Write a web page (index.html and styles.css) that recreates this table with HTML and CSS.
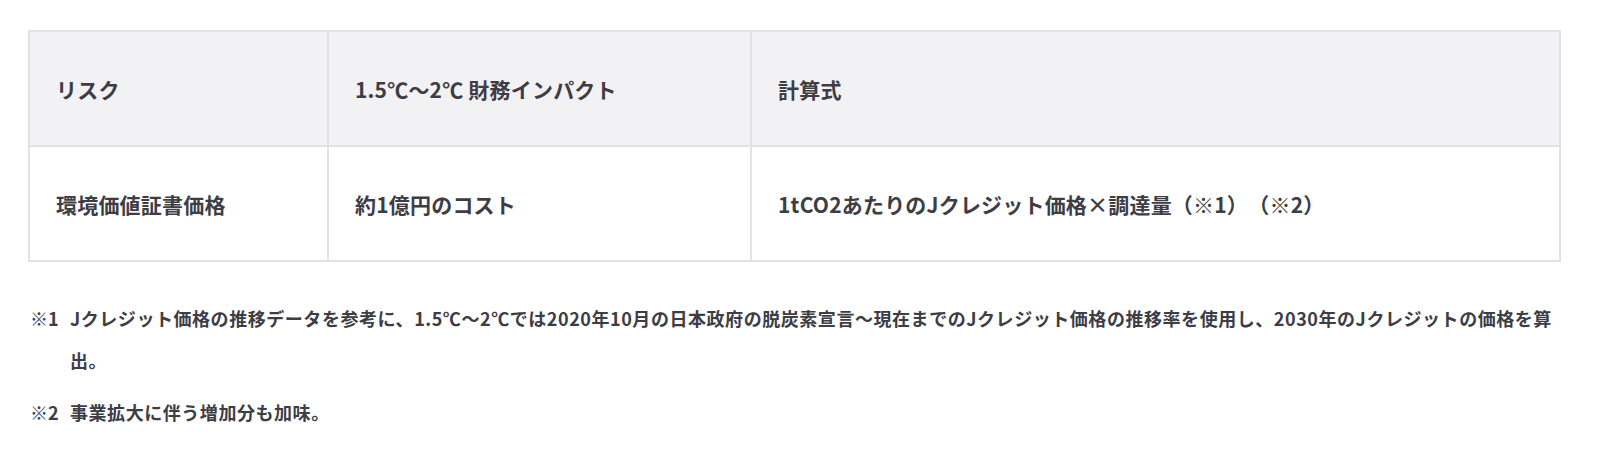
FILE: index.html
```html
<!DOCTYPE html>
<html lang="ja">
<head>
<meta charset="utf-8">
<link rel="stylesheet" href="styles.css">
</head>
<body>
<div class="page">
  <table class="risk-table">
    <colgroup>
      <col class="col-risk">
      <col class="col-impact">
      <col class="col-formula">
    </colgroup>
    <thead>
      <tr>
        <th>リスク</th>
        <th>1.5℃～2℃ 財務インパクト</th>
        <th>計算式</th>
      </tr>
    </thead>
    <tbody>
      <tr>
        <td>環境価値証書価格</td>
        <td>約1億円のコスト</td>
        <td>1tCO2あたりのJクレジット価格×調達量（※1）　（※2）</td>
      </tr>
    </tbody>
  </table>
  <ul class="notes">
    <li class="note"><span class="note-mark">※1</span><span class="note-text">Jクレジット価格の推移データを参考に、1.5℃～2℃では2020年10月の日本政府の脱炭素宣言～現在までのJクレジット価格の推移率を使用し、2030年のJクレジットの価格を算出。</span></li>
    <li class="note"><span class="note-mark">※2</span><span class="note-text">事業拡大に伴う増加分も加味。</span></li>
  </ul>
</div>
</body>
</html>
```

FILE: styles.css
```css
html, body {
  margin: 0;
  padding: 0;
  background: #ffffff;
}
body {
  font-family: "Noto Sans CJK JP", "Noto Sans", sans-serif;
  font-weight: 700;
  color: #3d3d45;
}
.page {
  padding: 30px 0 0 28px;
  width: 1533px;
}
.risk-table {
  width: 100%;
  border-collapse: collapse;
  table-layout: fixed;
  font-size: 21px;
  letter-spacing: 0.2px;
}
.col-risk { width: 299px; }
.col-impact { width: 423px; }
.risk-table th,
.risk-table td {
  border: 2px solid #e2e2e4;
  text-align: left;
  font-weight: 700;
  padding: 0 26px;
  height: 113px;
  line-height: 30px;
  vertical-align: middle;
}
.risk-table th {
  background: #f2f2f4;
}
.notes {
  list-style: none;
  margin: 35px 0 0;
  padding: 0;
  font-size: 18px;
  letter-spacing: 0.55px;
}
.note {
  display: flex;
  line-height: 42px;
  margin-bottom: 10px;
}
.note-mark {
  flex: 0 0 40px;
  padding-left: 2px;
  letter-spacing: 0;
}
.note-text {
  flex: 1;
}
```
